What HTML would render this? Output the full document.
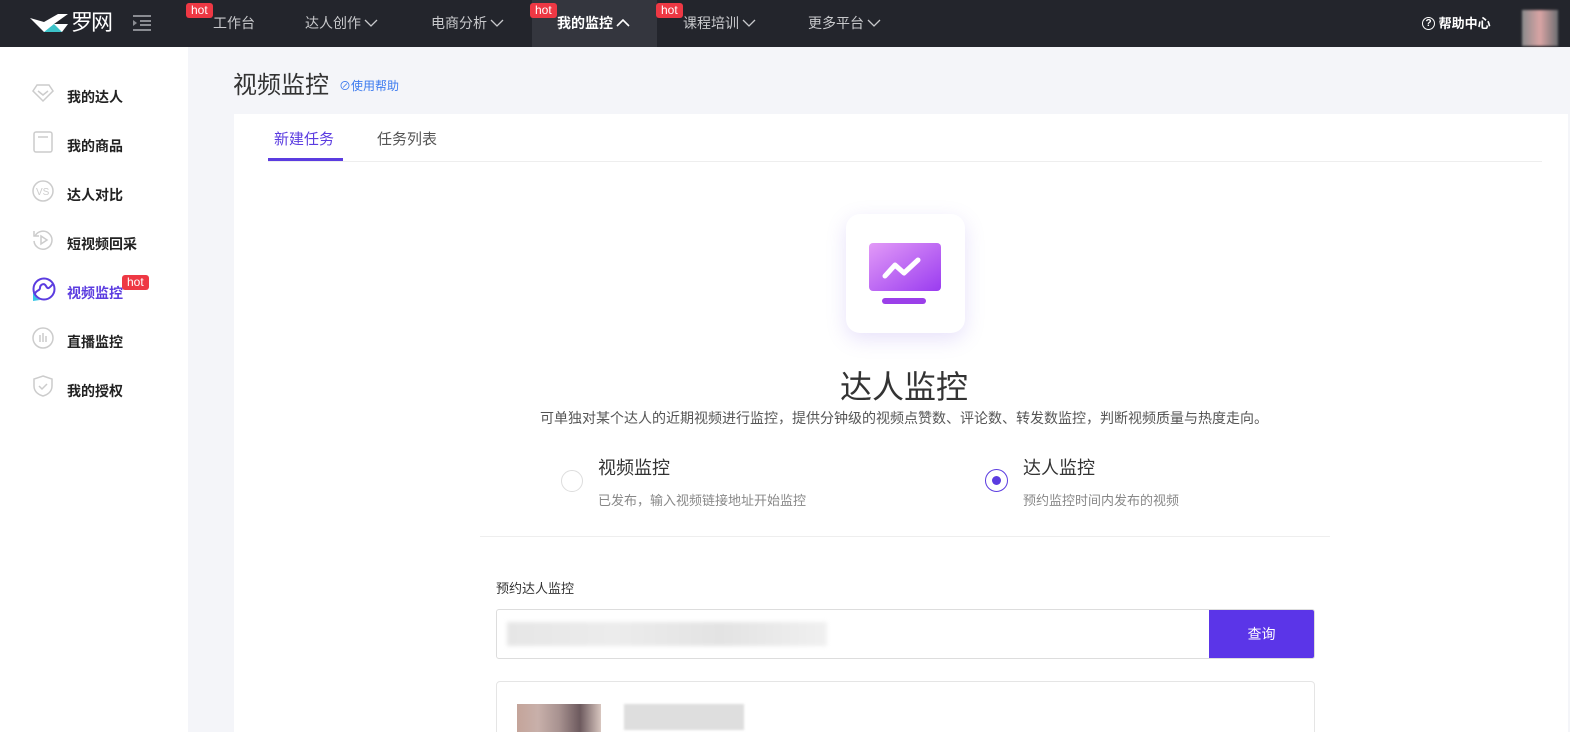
<!DOCTYPE html>
<html><head><meta charset="utf-8"><style>
*{margin:0;padding:0;box-sizing:border-box}
html,body{width:1570px;height:732px;overflow:hidden}
body{font-family:"Liberation Sans","Noto Sans CJK SC",sans-serif;background:#f4f5f9;position:relative;color:#333}
.top{position:absolute;left:0;top:0;width:1570px;height:47px;background:#23252c}
.nav{position:absolute;top:0;height:47px;line-height:47px;color:#c8c9cc;font-size:14px}
.nav svg{vertical-align:middle;margin-left:3px;margin-top:-3px}
.hot{position:absolute;background:#ee3844;color:#fff;font-size:12px;line-height:15px;padding:0 5px;border-radius:3px}
.side{position:absolute;left:0;top:47px;width:188px;height:685px;background:#fff}
.si{position:absolute;left:67px;font-size:14px;font-weight:bold;color:#222}
.ic{position:absolute;left:32px;width:22px;height:22px}
.card{position:absolute;left:234px;top:114px;width:1334px;height:618px;background:#fff;overflow:hidden}
.abs{position:absolute}
</style></head><body>
<div class="top">
 <svg class="abs" style="left:30px;top:12px" width="40" height="22" viewBox="0 0 40 22"><path d="M0 6 L14 10 L28 2 L38 2 L24 12 L38 12 L32 20 L14 20 Z" fill="#fff"/><path d="M14 20 L24 12 L32 20 Z" fill="#3cc3c9"/></svg>
 <div class="abs" style="left:71px;top:9px;color:#fff;font-size:22px;line-height:28px;letter-spacing:-2px">罗网</div>
 <svg class="abs" style="left:132px;top:14px" width="20" height="18"><path d="M1 2h18M8 7h11M8 11h11M1 16h18" stroke="#8a8c92" stroke-width="2"/><path d="M1 6l4 3-4 3z" fill="#8a8c92"/></svg>
 <div class="nav" style="left:213px">工作台</div><div class="hot" style="left:186px;top:3px">hot</div>
 <div class="nav" style="left:305px">达人创作<svg width="14" height="8"><path d="M1 1l6 6 6-6" stroke="#c8c9cc" fill="none" stroke-width="1.3"/></svg></div>
 <div class="nav" style="left:431px">电商分析<svg width="14" height="8"><path d="M1 1l6 6 6-6" stroke="#c8c9cc" fill="none" stroke-width="1.3"/></svg></div>
 <div class="nav" style="left:532px;width:125px;background:#34363e;color:#fff;padding-left:25px;font-weight:bold">我的监控<svg width="14" height="8"><path d="M1 7l6-6 6 6" stroke="#fff" fill="none" stroke-width="1.6"/></svg></div><div class="hot" style="left:530px;top:3px">hot</div>
 <div class="nav" style="left:683px">课程培训<svg width="14" height="8"><path d="M1 1l6 6 6-6" stroke="#c8c9cc" fill="none" stroke-width="1.3"/></svg></div><div class="hot" style="left:656px;top:3px">hot</div>
 <div class="nav" style="left:808px">更多平台<svg width="14" height="8"><path d="M1 1l6 6 6-6" stroke="#c8c9cc" fill="none" stroke-width="1.3"/></svg></div>
 <div class="nav" style="left:1422px;color:#fff;font-weight:bold;font-size:13px"><span style="display:inline-block;width:13px;height:13px;border:1.3px solid #fff;border-radius:50%;font-size:10px;line-height:11px;text-align:center;vertical-align:middle;margin-top:-3px">?</span> 帮助中心</div>
 <div class="abs" style="left:1522px;top:10px;width:36px;height:36px;background:linear-gradient(90deg,#8a8a8c,#d9a4a4,#6d6f72);filter:blur(1px)"></div>
</div>
<div class="side">
 <svg class="ic" style="top:35px" viewBox="0 0 22 22"><path d="M5 3h12l4 6-10 10L1 9z" fill="none" stroke="#ccc" stroke-width="1.5"/><path d="M6 9l5 4 5-4" fill="none" stroke="#ccc" stroke-width="1.5"/></svg><div class="si" style="top:40px">我的达人</div>
 <svg class="ic" style="top:84px" viewBox="0 0 22 22"><rect x="2" y="1" width="18" height="20" rx="2" fill="none" stroke="#ccc" stroke-width="1.5"/><path d="M6 6h10" stroke="#ccc" stroke-width="1.5"/></svg><div class="si" style="top:89px">我的商品</div>
 <svg class="ic" style="top:133px" viewBox="0 0 22 22"><circle cx="11" cy="11" r="10" fill="none" stroke="#ccc" stroke-width="1.5"/><text x="4" y="15" font-size="10" fill="#ccc" font-family="Liberation Sans">VS</text></svg><div class="si" style="top:138px">达人对比</div>
 <svg class="ic" style="top:182px" viewBox="0 0 22 22"><path d="M3 7a9 9 0 1 1 -1 5" fill="none" stroke="#ccc" stroke-width="1.5"/><path d="M2 2v5h5" fill="none" stroke="#ccc" stroke-width="1.5"/><path d="M9 7l6 4-6 4z" fill="none" stroke="#ccc" stroke-width="1.5"/></svg><div class="si" style="top:187px">短视频回采</div>
 <svg class="ic" style="top:230px;width:24px;height:24px" viewBox="0 0 24 24"><path d="M1 14c1 4 3 7 7 9l-7 1z" fill="#38c6e6"/><circle cx="12" cy="12" r="10.5" fill="none" stroke="#5b3ce0" stroke-width="2"/><path d="M3 17c1-4 5-3 5-6s4-6 6-2 3 2 7-2" fill="none" stroke="#5b3ce0" stroke-width="2"/></svg><div class="si" style="top:236px;color:#5b3ce0">视频监控</div><div class="hot" style="left:122px;top:228px">hot</div>
 <svg class="ic" style="top:280px" viewBox="0 0 22 22"><circle cx="11" cy="11" r="10" fill="none" stroke="#ccc" stroke-width="1.5"/><path d="M8 8v7M11 6v9M14 9v6" stroke="#ccc" stroke-width="1.5"/></svg><div class="si" style="top:285px">直播监控</div>
 <svg class="ic" style="top:328px" viewBox="0 0 22 22"><path d="M11 1l9 3v7c0 6-5 9-9 10-4-1-9-4-9-10V4z" fill="none" stroke="#ccc" stroke-width="1.5"/><path d="M7 11l3 3 5-5" fill="none" stroke="#ccc" stroke-width="1.5"/></svg><div class="si" style="top:334px">我的授权</div>
</div>
<div class="abs" style="left:233px;top:65px;font-size:24px;color:#333">视频监控</div>
<div class="abs" style="left:339px;top:77px;font-size:12px;color:#3d7bef">⊘使用帮助</div>
<div class="card">
 <div class="abs" style="left:40px;top:14px;font-size:15px;color:#5b3ce0">新建任务</div>
 <div class="abs" style="left:34px;top:44px;width:75px;height:3px;background:#5b3ce0"></div>
 <div class="abs" style="left:143px;top:14px;font-size:15px;color:#555">任务列表</div>
 <div class="abs" style="left:34px;top:47px;width:1274px;height:1px;background:#eee"></div>
 <div class="abs" style="left:612px;top:100px;width:119px;height:119px;border-radius:14px;background:#fff;box-shadow:0 6px 20px rgba(120,90,230,.18)">
  <svg width="119" height="119"><defs><linearGradient id="g" x1="0" y1="0" x2="1" y2="1"><stop offset="0" stop-color="#e29af7"/><stop offset="1" stop-color="#9a3cf0"/></linearGradient></defs><rect x="23" y="29" width="72" height="48" rx="4" fill="url(#g)"/><path d="M39 62l10-11 9 8 14-13" stroke="#fff" stroke-width="5" fill="none" stroke-linecap="round" stroke-linejoin="round"/><rect x="36" y="84" width="44" height="6" rx="3" fill="#9b3fe9"/></svg>
 </div>
 <div class="abs" style="left:0;width:1340px;top:248px;text-align:center;font-size:32px;color:#333">达人监控</div>
 <div class="abs" style="left:0;width:1340px;top:294px;text-align:center;font-size:14px;color:#555">可单独对某个达人的近期视频进行监控，提供分钟级的视频点赞数、评论数、转发数监控，判断视频质量与热度走向。</div>
 <div class="abs" style="left:327px;top:356px;width:22px;height:22px;border:1px solid #ddd;border-radius:50%"></div>
 <div class="abs" style="left:364px;top:340px;font-size:18px;color:#333">视频监控</div>
 <div class="abs" style="left:364px;top:376px;font-size:13px;color:#888">已发布，输入视频链接地址开始监控</div>
 <div class="abs" style="left:751px;top:355px;width:23px;height:23px;border:1px solid #5b3ce0;border-radius:50%"><div style="margin:6px;width:9px;height:9px;border-radius:50%;background:#5b3ce0"></div></div>
 <div class="abs" style="left:789px;top:340px;font-size:18px;color:#333">达人监控</div>
 <div class="abs" style="left:789px;top:376px;font-size:13px;color:#888">预约监控时间内发布的视频</div>
 <div class="abs" style="left:246px;top:422px;width:850px;height:1px;background:#eee"></div>
 <div class="abs" style="left:262px;top:464px;font-size:13px;color:#333">预约达人监控</div>
 <div class="abs" style="left:262px;top:495px;width:819px;height:50px;border:1px solid #ddd;border-radius:3px;overflow:hidden">
  <div class="abs" style="left:10px;top:12px;width:320px;height:24px;background:linear-gradient(90deg,#e6e6e6,#ececec,#e3e3e3,#f0f0f0);filter:blur(2px)"></div>
  <div class="abs" style="right:0;top:0;width:105px;height:48px;background:#5b35e8;color:#fff;font-size:14px;text-align:center;line-height:48px">查询</div>
 </div>
 <div class="abs" style="left:262px;top:567px;width:819px;height:80px;border:1px solid #e5e5e5;border-radius:4px">
  <div class="abs" style="left:20px;top:22px;width:84px;height:40px;background:linear-gradient(90deg,#c4a49a,#c8b0aa,#a89290,#6d5a5e,#d8c6bf)"></div>
  <div class="abs" style="left:127px;top:22px;width:120px;height:26px;background:#dedede;filter:blur(1px)"></div>
 </div>
</div>
</body></html>
